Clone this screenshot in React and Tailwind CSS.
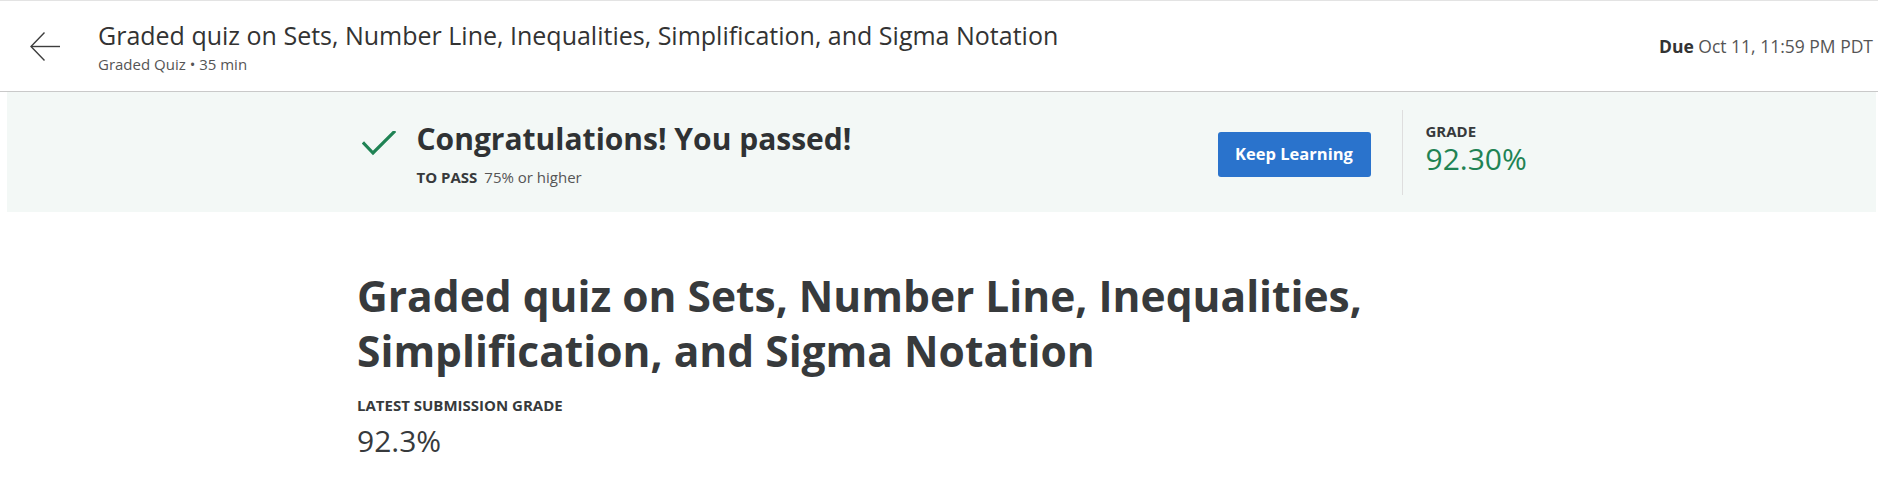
const ArrowBack = () => (
  <svg width="30" height="30" viewBox="0 0 30 30" fill="none" stroke="#3d3d3d" strokeWidth="1.4">
    <path d="M1 15.5H30" />
    <path d="M14.5 1.5L1 15.5L14.5 29.5" />
  </svg>
);

const CheckMark = () => (
  <svg width="34" height="26" viewBox="0 0 34 26" fill="none" stroke="#1f8354" strokeWidth="3.2" strokeLinecap="square">
    <path d="M2 12.5L11 22L32 1" />
  </svg>
);

export default function App() {
  return (
    <div className="h-[478px] w-full overflow-hidden bg-white font-['Open_Sans',sans-serif] text-[#373a3c]">
      {/* Top bar */}
      <header className="flex h-[92px] items-center border-t border-b border-t-[#e3e3e3] border-b-[#c9c9c9] pl-[30px] pr-[5px]">
        <button type="button" className="flex h-[30px] w-[30px] items-center justify-center" aria-label="Back">
          <ArrowBack />
        </button>
        <div className="ml-[38px] flex flex-col">
          <h1 className="text-[25px] leading-[34px] text-[#333]">
            Graded quiz on Sets, Number Line, Inequalities, Simplification, and Sigma Notation
          </h1>
          <p className="mt-[2px] text-[15px] leading-[20px] text-[#555]">Graded Quiz • 35 min</p>
        </div>
        <div className="ml-auto text-[17.5px] text-[#555]">
          <span className="font-bold text-[#333]">Due</span> Oct 11, 11:59 PM PDT
        </div>
      </header>

      {/* Result banner */}
      <section className="ml-[7px] mr-[2px] h-[120px] bg-[#f3f8f6]">
        <div className="mx-auto flex h-full w-[1164px] items-center">
          <div className="mt-[2px] flex flex-1 items-start pl-[2px]">
            <div className="mt-[12px]">
              <CheckMark />
            </div>
            <div className="ml-[21px]">
              <h2 className="text-[30px] font-bold leading-[40px] text-[#2f3234]">Congratulations! You passed!</h2>
              <p className="mt-[8px] text-[15px] leading-[20px] text-[#555]">
                <span className="mr-[7px] font-bold text-[#373a3c]">TO PASS</span>75% or higher
              </p>
            </div>
          </div>
          <button
            type="button"
            className="mt-[5px] h-[45px] w-[153px] rounded-[3px] bg-[#2a73cc] text-[16.5px] font-bold text-white"
          >
            Keep Learning
          </button>
          <div className="ml-[31px] h-[85px] w-px bg-[#dedede]" />
          <div className="mb-[6px] ml-[23px] w-[98px]">
            <div className="text-[15px] font-bold leading-[20px] text-[#373a3c]">GRADE</div>
            <div className="text-[30px] leading-[36px] text-[#1f8354]">92.30%</div>
          </div>
        </div>
      </section>

      {/* Main */}
      <main className="mx-auto w-[1164px] pt-[56px]">
        <h1 className="text-[42.5px] font-bold leading-[55px] text-[#373a3c]">
          Graded quiz on Sets, Number Line, Inequalities, Simplification, and Sigma Notation
        </h1>
        <div className="mt-[17px] text-[15px] font-bold leading-[20px] text-[#373a3c]">LATEST SUBMISSION GRADE</div>
        <div className="mt-[8px] text-[30px] leading-[36px] text-[#373a3c]">92.3%</div>
      </main>
    </div>
  );
}
